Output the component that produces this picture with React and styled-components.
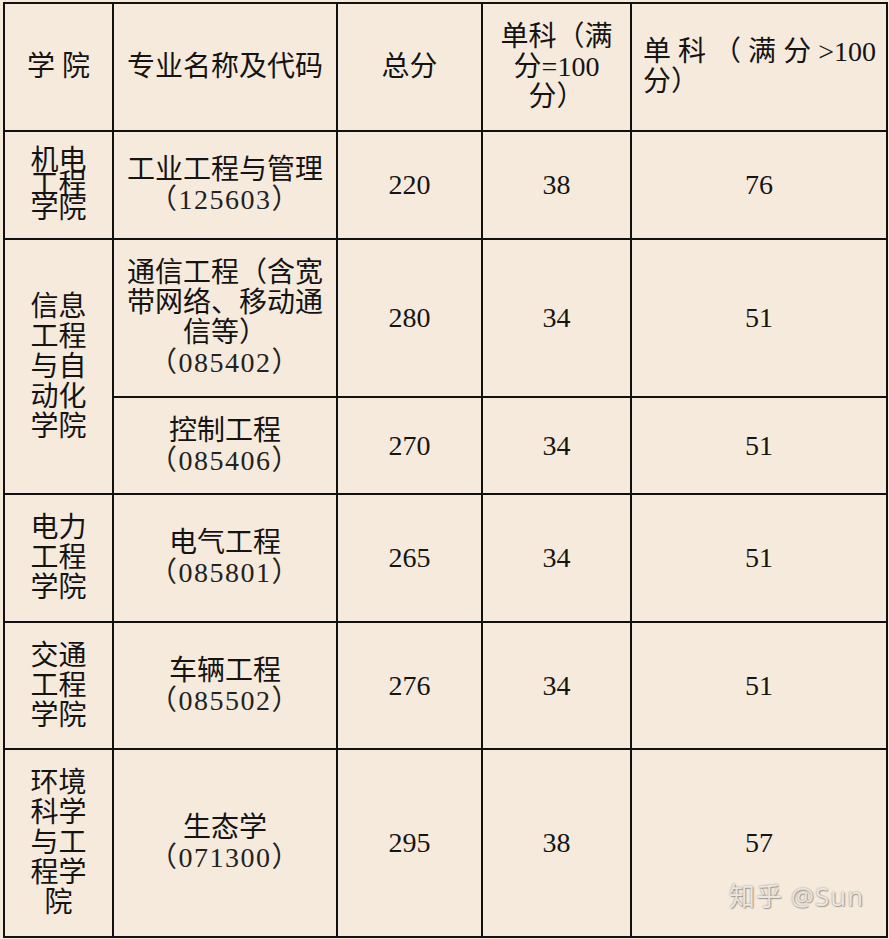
import React from 'react'
import styled, { createGlobalStyle } from 'styled-components'

const rows = [
  {
    college: '机电工程学院',
    tight: true,
    majors: [{ name: '工业工程与管理', code: '125603', total: 220, a: 38, b: 76, h: 108 }]
  },
  {
    college: '信息工程与自动化学院',
    majors: [
      { name: '通信工程（含宽带网络、移动通信等）', code: '085402', total: 280, a: 34, b: 51, h: 158 },
      { name: '控制工程', code: '085406', total: 270, a: 34, b: 51, h: 97 }
    ]
  },
  {
    college: '电力工程学院',
    majors: [{ name: '电气工程', code: '085801', total: 265, a: 34, b: 51, h: 128 }]
  },
  {
    college: '交通工程学院',
    majors: [{ name: '车辆工程', code: '085502', total: 276, a: 34, b: 51, h: 127 }]
  },
  {
    college: '环境科学与工程学院',
    majors: [{ name: '生态学', code: '071300', total: 295, a: 38, b: 57, h: 188 }]
  }
]

export default function App() {
  return (
    <Page>
      <GlobalStyle />
      <Table>
        <colgroup>
          <col style={{ width: 109 }} />
          <col style={{ width: 224 }} />
          <col style={{ width: 145 }} />
          <col style={{ width: 149 }} />
          <col style={{ width: 256 }} />
        </colgroup>
        <tbody>
          <Row $h={128}>
            <Cell $pad={20}>学 院</Cell>
            <Cell>专业名称及代码</Cell>
            <Cell>总分</Cell>
            <Cell $pad={14}>单科（满分=100分）</Cell>
            <Cell $align="left" $pad={11}>
              <SpreadLine>单科（满分&gt;100</SpreadLine>
              <div>分）</div>
            </Cell>
          </Row>
          {rows.map(group =>
            group.majors.map((m, i) => (
              <Row key={m.code} $h={m.h}>
                {i === 0 && (
                  <Cell $pad={20} $lh={group.tight ? 24 : 30} rowSpan={group.majors.length}>
                    {group.college}
                  </Cell>
                )}
                <Cell>
                  <div>{m.name}</div>
                  <Code>（{m.code}）</Code>
                </Cell>
                <Cell>{m.total}</Cell>
                <Cell>{m.a}</Cell>
                <Cell>{m.b}</Cell>
              </Row>
            ))
          )}
        </tbody>
      </Table>
      <Watermark>知乎 @Sun</Watermark>
    </Page>
  )
}

const GlobalStyle = createGlobalStyle`
  html, body {
    margin: 0;
    padding: 0;
    background: #f6eadc;
    overflow: hidden;
  }
`

const Page = styled.div`
  position: relative;
  width: 889px;
  height: 939px;
  overflow: hidden;
  box-sizing: border-box;
  padding: 2px 0 0 3px;
  background: #f6eadc;
`

const Table = styled.table`
  border-collapse: collapse;
  table-layout: fixed;
  width: 883px;
  font-family: "Liberation Serif", "Noto Sans CJK SC", serif;
  font-size: 28px;
  color: #141414;
`

const Row = styled.tr`
  height: ${p => p.$h}px;
`

const Cell = styled.td`
  border: 2px solid #111;
  padding: 0 ${p => (p.$pad != null ? p.$pad : 10)}px;
  text-align: ${p => p.$align || 'center'};
  vertical-align: middle;
  line-height: ${p => p.$lh || 30}px;
  word-break: break-all;
`

const Code = styled.div`
  letter-spacing: 1.5px;
  color: #222;
`

const SpreadLine = styled.div`
  width: 233px;
  text-align: justify;
  text-align-last: justify;
  white-space: nowrap;
`

const Watermark = styled.div`
  position: absolute;
  left: 729px;
  top: 880px;
  font-family: "Open Sans", "Noto Sans CJK SC", sans-serif;
  font-size: 26px;
  letter-spacing: 1px;
  line-height: 32px;
  color: rgba(240, 236, 230, 0.95);
  text-shadow: 0 0 2px rgba(0, 0, 0, 0.4), 1px 1px 1px rgba(0, 0, 0, 0.25);
`
